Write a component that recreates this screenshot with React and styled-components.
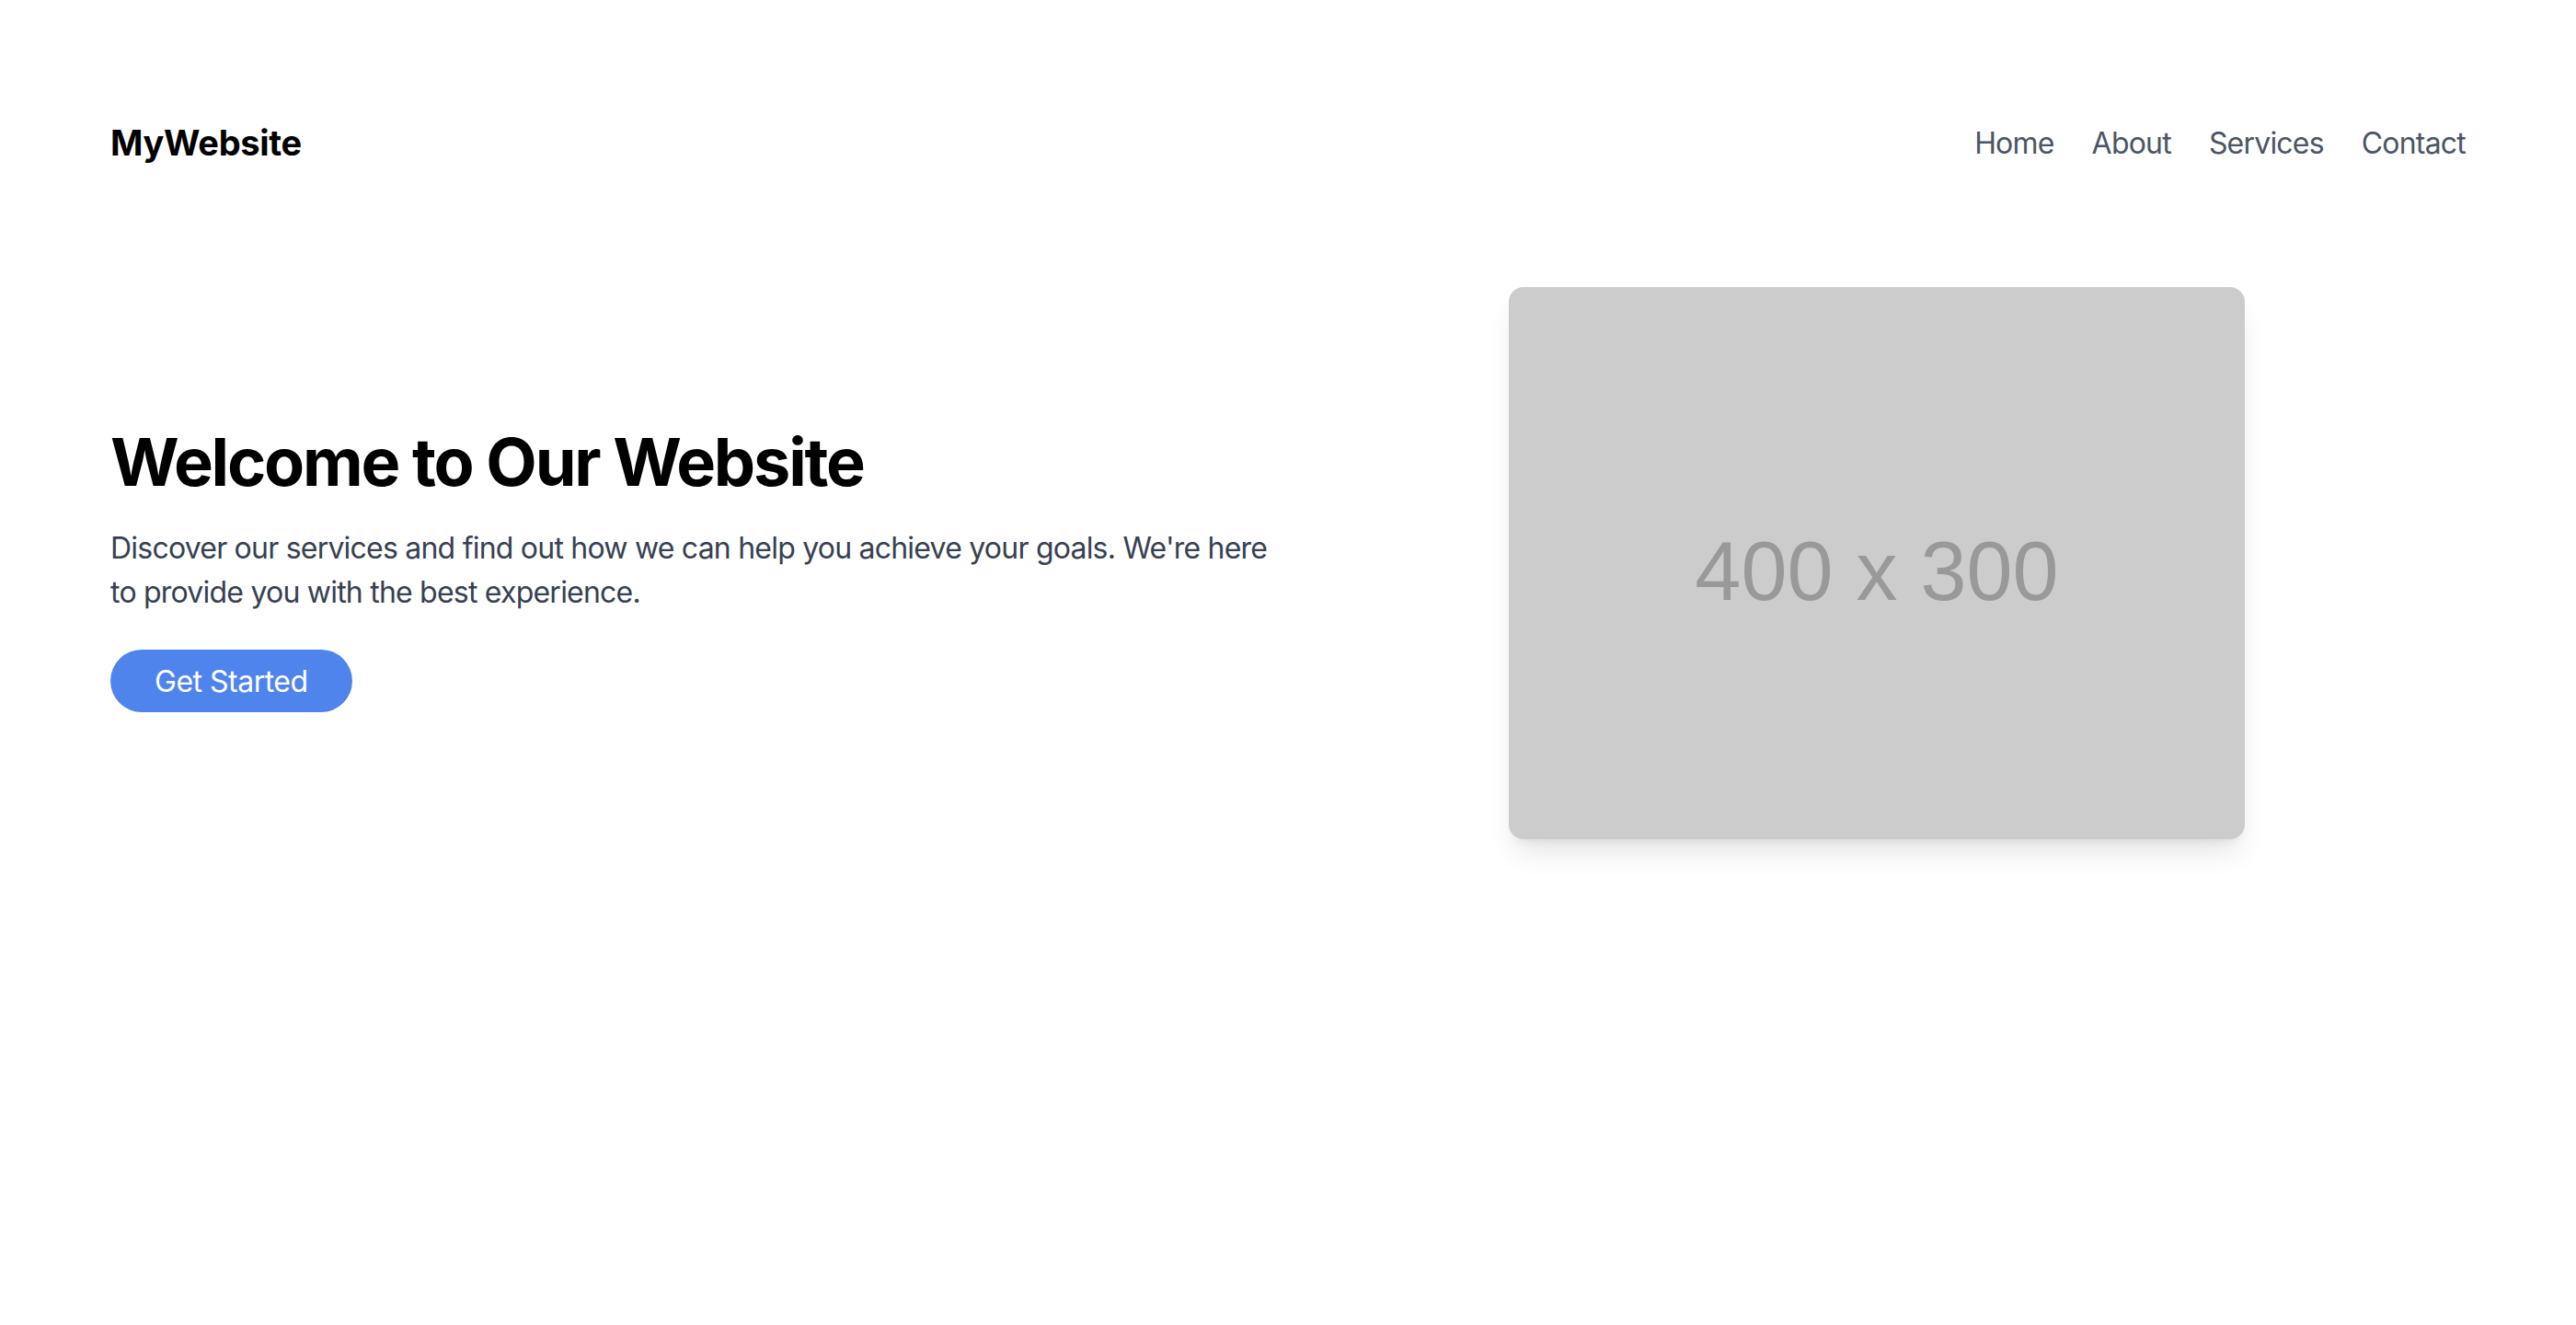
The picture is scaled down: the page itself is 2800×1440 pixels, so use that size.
import React from 'react'
import styled, { createGlobalStyle } from 'styled-components'

const GlobalStyle = createGlobalStyle`
  html, body {
    margin: 0;
    padding: 0;
    background: #ffffff;
    font-family: Inter, "Noto Sans", sans-serif;
    -webkit-font-smoothing: antialiased;
  }
  * {
    box-sizing: border-box;
  }
`

const Page = styled.div`
  padding: 0 120px;
  min-height: 1440px;
`

const Header = styled.header`
  display: flex;
  align-items: center;
  justify-content: space-between;
  padding-top: 127px;
`

const Logo = styled.div`
  font-size: 38px;
  line-height: 56px;
  font-weight: 700;
  color: #000000;
  letter-spacing: -0.3px;
`

const Nav = styled.nav`
  display: flex;
  gap: 41px;
  padding-top: 2px;
`

const NavLink = styled.a`
  font-size: 32px;
  line-height: 48px;
  color: #4b5563;
  letter-spacing: -0.8px;
  text-decoration: none;
  cursor: pointer;
`

const Hero = styled.section`
  display: flex;
  align-items: center;
  padding-top: 129px;
`

const Column = styled.div`
  flex: 1 1 50%;
  display: flex;
  flex-direction: column;
  align-items: ${props => (props.center ? 'center' : 'flex-start')};
`

const Title = styled.h1`
  margin: 0 0 18px;
  font-size: 72px;
  line-height: 104px;
  font-weight: 700;
  color: #000000;
  letter-spacing: -2.2px;
`

const Lead = styled.p`
  margin: 0 0 38px;
  font-size: 32px;
  line-height: 48px;
  color: #374151;
  letter-spacing: -0.78px;
`

const Button = styled.button`
  height: 68px;
  padding: 0 48px;
  border: none;
  border-radius: 34px;
  background: #4f84ed;
  color: #ffffff;
  font-family: Inter, "Noto Sans", sans-serif;
  font-size: 32px;
  letter-spacing: -0.5px;
  cursor: pointer;
`

const Placeholder = styled.div`
  width: 800px;
  height: 600px;
  border-radius: 16px;
  background: #cccccc;
  box-shadow: 0 20px 30px -6px rgba(0, 0, 0, 0.1), 0 8px 12px -8px rgba(0, 0, 0, 0.1);
  display: flex;
  align-items: center;
  justify-content: center;
  padding-top: 18px;
`

const PlaceholderText = styled.span`
  font-family: "Liberation Sans", Arial, sans-serif;
  font-size: 90px;
  color: #999999;
`

const links = ['Home', 'About', 'Services', 'Contact']

const App = () => (
  <Page>
    <GlobalStyle />
    <Header>
      <Logo>MyWebsite</Logo>
      <Nav>
        {links.map(link => (
          <NavLink key={link}>{link}</NavLink>
        ))}
      </Nav>
    </Header>
    <Hero>
      <Column>
        <Title>Welcome to Our Website</Title>
        <Lead>
          Discover our services and find out how we can help you achieve your goals. We're here to provide you with the best experience.
        </Lead>
        <Button>Get Started</Button>
      </Column>
      <Column center>
        <Placeholder>
          <PlaceholderText>400 x 300</PlaceholderText>
        </Placeholder>
      </Column>
    </Hero>
  </Page>
)

export default App
